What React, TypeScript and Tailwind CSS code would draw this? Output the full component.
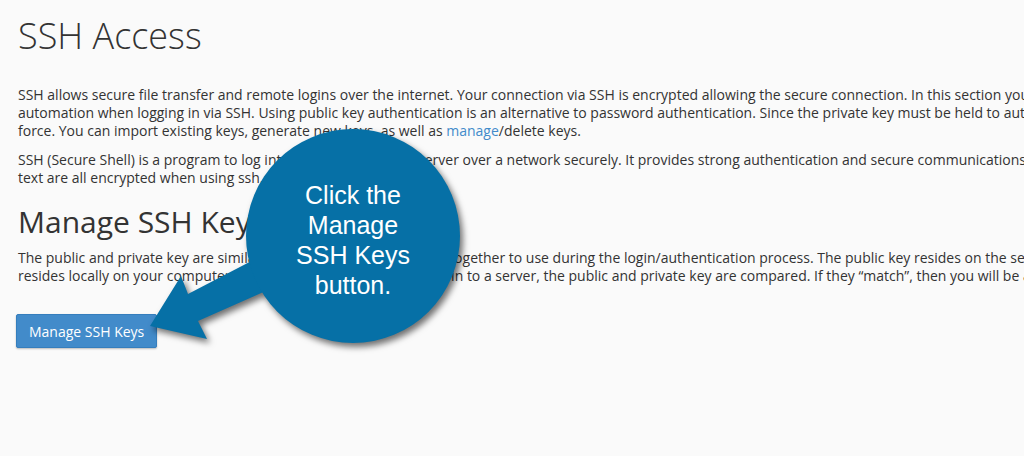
const intro = [
  "SSH allows secure file transfer and remote logins over the internet. Your connection via SSH is encrypted allowing the secure connection. In this section you can manage your SSH keys to allow",
  "automation when logging in via SSH. Using public key authentication is an alternative to password authentication. Since the private key must be held to authenticate, it is virtually impossible to brute",
];

const shell = [
  "SSH (Secure Shell) is a program to log into another computer/server over a network securely. It provides strong authentication and secure communications over insecure channels. Your login, commands, and",
  "text are all encrypted when using ssh.",
];

const keys = [
  "The public and private key are similar to a lock and key; they work together to use during the login/authentication process. The public key resides on the server (the lock), while the private key",
  "resides locally on your computer/device (your keys). When you log in to a server, the public and private key are compared. If they “match”, then you will be allowed to log in.",
];

const Callout = () => {
  return (
    <>
      {/* Arrow + bubble */}
      <svg
        className="absolute left-0 top-0 pointer-events-none drop-shadow-[3px_4px_3px_rgba(0,0,0,0.55)]"
        width="1024"
        height="456"
        viewBox="0 0 1024 456"
      >
        <polygon
          points="150,326 181,276 188,294 330,220 340,258 198,321 207,339"
          fill="#0670a6"
        />
        <circle cx="353" cy="236" r="107" fill="#0670a6" />
      </svg>
      <div className="absolute left-[246px] top-[133px] w-[214px] h-[214px] flex flex-col items-center justify-center text-white text-[25px] leading-[30px] font-['Liberation_Sans',Arial,sans-serif] text-center">
        <span>Click the</span>
        <span>Manage</span>
        <span>SSH Keys</span>
        <span>button.</span>
      </div>
    </>
  );
};

export default function App() {
  return (
    <div className="relative w-[1024px] h-[456px] overflow-hidden bg-[#fafafa] text-[#333] font-['Open_Sans',sans-serif]">
      <div className="pl-[18px]">
        <h1 className="mt-[16px] text-[36px] leading-[40px] font-light">SSH Access</h1>

        <div className="mt-[30px] text-[14px] leading-[18px]">
          {intro.map((line, i) => (
            <div key={i} className="whitespace-nowrap">
              {line}
            </div>
          ))}
          <div className="whitespace-nowrap">
            force. You can import existing keys, generate new keys, as well as{" "}
            <a className="text-[#428bca]">manage</a>/delete keys.
          </div>
        </div>

        <div className="mt-[11px] text-[14px] leading-[18px]">
          {shell.map((line, i) => (
            <div key={i} className="whitespace-nowrap">
              {line}
            </div>
          ))}
        </div>

        <h2 className="mt-[18px] text-[30px] leading-[33px] font-normal">Manage SSH Keys</h2>

        <div className="mt-[11px] text-[14px] leading-[18px]">
          {keys.map((line, i) => (
            <div key={i} className="whitespace-nowrap">
              {line}
            </div>
          ))}
        </div>

        <button className="mt-[29px] -ml-[2px] h-[34px] px-[12px] bg-[#428bca] border border-[#357ebd] rounded-[2px] text-white text-[14px] shadow-[0_1px_2px_rgba(0,0,0,0.25)]">
          Manage SSH Keys
        </button>
      </div>

      <Callout />
    </div>
  );
}
